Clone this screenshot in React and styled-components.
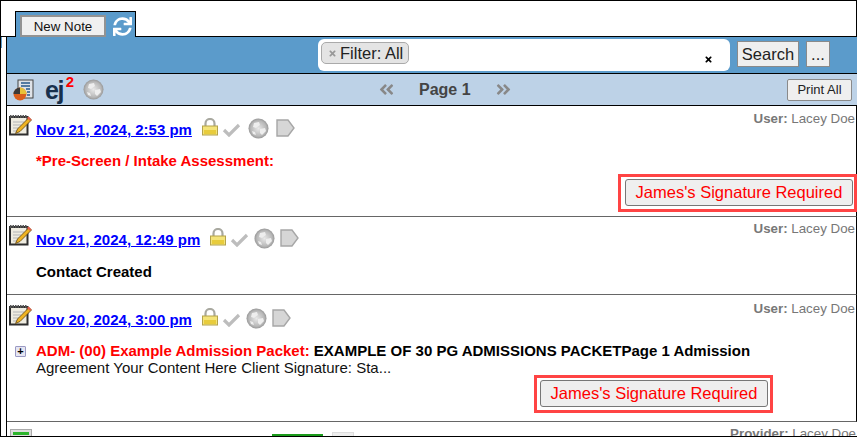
import React from "react";
import styled, { createGlobalStyle } from "styled-components";
import { FaSync, FaAngleDoubleLeft, FaAngleDoubleRight, FaTimes } from "react-icons/fa";

const Global = createGlobalStyle`
  html, body { margin: 0; background: #fff; }
  body { font-family: "Liberation Sans", Arial, sans-serif; }
`;

const Frame = styled.div`
  box-sizing: border-box;
  width: 857px;
  height: 437px;
  overflow: hidden;
  position: relative;
  border: 1px solid #000;
  border-right: none;
  background: #fff;
  &::before {
    content: "";
    position: absolute;
    left: 0;
    top: 36px;
    width: 1px;
    height: 11px;
    background: #5b9bcb;
  }
`;

const TabStrip = styled.div`
  box-sizing: border-box;
  height: 36px;
  padding-left: 14px;
  display: flex;
  align-items: flex-end;
  border-bottom: 1px solid #000;
  border-right: 1px solid #000;
`;

const Tab = styled.div`
  box-sizing: border-box;
  position: relative;
  width: 121px;
  height: 26px;
  margin-bottom: -1px;
  padding: 3px 0 0 4px;
  display: flex;
  align-items: flex-start;
  gap: 7px;
  background: #5b9bcb;
  border: 1px solid #000;
  border-bottom: none;
`;

const TabButton = styled.button`
  box-sizing: border-box;
  width: 86px;
  height: 22px;
  padding: 0;
  font: 13.33px "Liberation Sans", Arial, sans-serif;
  color: #111;
  background: #f0f0f0;
  border: 2px solid #939393;
`;

const RefreshIcon = styled(FaSync)`
  width: 19px;
  height: 19px;
  color: #fff;
  margin-top: 2px;
`;

const Workspace = styled.div`
  margin-left: 5px;
  border-left: 1px solid #000;
`;

const SearchBar = styled.div`
  box-sizing: border-box;
  height: 37px;
  padding: 2px 27px 0 0;
  display: flex;
  justify-content: flex-end;
  align-items: flex-start;
  gap: 7px;
  background: #5b9bcb;
  border-bottom: 1px solid #000;
`;

const FilterBox = styled.div`
  box-sizing: border-box;
  width: 412px;
  height: 32px;
  padding: 3px;
  display: flex;
  justify-content: space-between;
  background: #fff;
  border-radius: 6px;
`;

const Chip = styled.span`
  box-sizing: border-box;
  height: 22px;
  padding: 0 5px 0 6px;
  display: inline-flex;
  align-items: center;
  gap: 3px;
  font-size: 16.5px;
  color: #222;
  background: #e4e4e4;
  border: 1px solid #aaa;
  border-radius: 5px;
`;

const ChipClose = styled(FaTimes)`
  width: 9px;
  height: 9px;
  color: #999;
`;

const ClearIcon = styled(FaTimes)`
  width: 9px;
  height: 9px;
  color: #000;
  margin: 13px 14px 0 0;
`;

const BarButton = styled.button`
  box-sizing: border-box;
  height: 26px;
  margin-top: 2px;
  padding: 0;
  width: ${(p) => p.$width}px;
  font: 16.5px "Liberation Sans", Arial, sans-serif;
  color: #222;
  background: #efefef;
  border: 1px solid #8a8a8a;
`;

const PagerBar = styled.div`
  box-sizing: border-box;
  height: 32px;
  padding: 0 5px 0 6px;
  display: grid;
  grid-template-columns: 365px auto 1fr;
  align-items: center;
  background: #bdd2e7;
  border-bottom: 1px solid #000;
`;

const ToolIcons = styled.div`
  display: flex;
  align-items: center;
`;

const EjLogo = styled.span`
  margin-left: 11px;
  width: 38px;
  display: flex;
  align-items: flex-start;
  font-size: 25px;
  font-weight: 700;
  line-height: 26px;
  letter-spacing: -1.5px;
  color: #17304d;
`;

const EjCount = styled.span`
  margin: -3px 0 0 3px;
  font-size: 15px;
  line-height: 16px;
  letter-spacing: 0;
  color: #f00;
`;

const Pager = styled.div`
  display: flex;
  align-items: center;
  gap: 24px;
  color: #888;
  font-size: 16px;
  font-weight: 700;
`;

const PageLabel = styled.span`
  color: #444;
`;

const PagerArrow = styled.span`
  display: flex;
  font-size: 17px;
`;

const PrintButton = styled.button`
  justify-self: end;
  box-sizing: border-box;
  width: 65px;
  height: 22px;
  padding: 0;
  font: 13px "Liberation Sans", Arial, sans-serif;
  color: #222;
  background: #efefef;
  border: 1px solid #8a8a8a;
  border-radius: 2px;
`;

const Note = styled.section`
  box-sizing: border-box;
  height: ${(p) => p.$height}px;
  padding: ${(p) => p.$pad}px 1px 0 2px;
  border-bottom: 1px solid #666;
  border-right: 1px solid #000;
`;

const NoteHead = styled.div`
  display: flex;
  justify-content: space-between;
  align-items: flex-start;
`;

const NoteTitleRow = styled.div`
  display: flex;
  align-items: flex-start;
`;

const DateLink = styled.a`
  margin: 7px 10px 0 3px;
  font-size: 15px;
  font-weight: 700;
  color: #00f;
  text-decoration: underline;
`;

const StatusIcons = styled.div`
  display: flex;
  align-items: flex-start;
  gap: ${(p) => (p.$wide ? 7 : 5)}px;
  margin-top: 4px;
  svg:first-child {
    margin-right: ${(p) => (p.$wide ? -3 : -1)}px;
  }
`;

const Author = styled.div`
  margin-top: -3px;
  font-size: 13.33px;
  color: #777;
  white-space: nowrap;
  b { font-weight: 700; }
`;

const NoteBody = styled.div`
  padding-left: 27px;
  margin-top: ${(p) => p.$top}px;
  position: relative;
  font-size: 15px;
  line-height: 17px;
  color: #111;
`;

const RedTitle = styled.span`
  font-weight: 700;
  color: #f00;
`;

const BlackTitle = styled.span`
  font-weight: 700;
  color: #000;
`;

const ExpandBox = styled.span`
  position: absolute;
  left: 6px;
  top: 4px;
  box-sizing: border-box;
  width: 11px;
  height: 11px;
  border: 1px solid #9a9ac4;
  border-radius: 1px;
  background: #e6e6f2;
  color: #000;
  font-size: 11px;
  font-weight: 700;
  line-height: 9px;
  text-align: center;
`;

const ActionRow = styled.div`
  display: flex;
  justify-content: flex-end;
  margin: ${(p) => p.$top}px ${(p) => p.$right}px 0 0;
`;

const Highlight = styled.div`
  box-sizing: border-box;
  width: 239px;
  height: 38px;
  padding: 2px 0 0 ${(p) => p.$inset}px;
  border: 3px solid #f44;
`;

const SignButton = styled.button`
  display: block;
  box-sizing: border-box;
  width: 228px;
  height: 27px;
  padding: 0;
  font: 16.5px "Liberation Sans", Arial, sans-serif;
  color: #f00;
  background: #efefef;
  border: 1px solid #777;
  border-radius: 3px;
`;

const StubRow = styled.div`
  display: flex;
  justify-content: space-between;
  padding: 7px 1px 0 3px;
`;

const StubIcons = styled.div`
  display: flex;
  align-items: flex-start;
`;

const GreenBadge = styled.span`
  box-sizing: border-box;
  width: 22px;
  height: 10px;
  padding: 2px;
  background: #ddd;
  border: 1px solid #aaa;
  &::after {
    content: "";
    display: block;
    height: 3px;
    background: #2db52d;
  }
`;

const GreenBar = styled.span`
  width: 51px;
  height: 3px;
  margin: 5px 0 0 240px;
  background: #1c9c1c;
`;

const GrayBox = styled.span`
  width: 22px;
  height: 8px;
  margin: 3px 0 0 9px;
  background: #eee;
  border: 1px solid #ddd;
  box-sizing: border-box;
`;

const Gauge = () => (
  <svg width="21" height="22" viewBox="0 0 21 22">
    <rect x="5" y="1" width="15" height="18" fill="#dfe3e8" stroke="#444" />
    <path d="M8 4h9M8 7h9M13 10h4M14 13h3M14 16h3" stroke="#2a5a8a" strokeWidth="1.4" />
    <circle cx="7" cy="15" r="6.5" fill="#d95f1e" />
    <path d="M7 15V8.500a6.500 6.500 0 0 0-6.500 6.500z" fill="#3a3a3a" />
    <path d="M7 15h6.500a6.500 6.500 0 0 0-6.500-6.500z" fill="#e8c23a" />
  </svg>
);

const NotePad = () => (
  <svg width="23" height="22" viewBox="0 0 23 22" style={{ flexShrink: 0, marginRight: 1 }}>
    <rect x="1" y="3" width="17.500" height="17.500" fill="#efece0" stroke="#2e2e2e" strokeWidth="2" />
    <path d="M1 2.500h17" stroke="#555" strokeWidth="3" strokeDasharray="1.500 1" />
    <path d="M4 8h11M4 11h8M4 14h6M4 17h5" stroke="#b5b5b5" />
    <path d="M20 3.500l2.500 2.500-11.500 11.500-4.500 2 2-4.500z" fill="#efb321" stroke="#5e4212" strokeWidth=".8" />
    <path d="M19.500 2.500l3 3-1.500 1.500-3-3z" fill="#e4604e" />
  </svg>
);

const Lock = () => (
  <svg width="16" height="18" viewBox="0 0 16 18">
    <path d="M3.500 9V5.500a4.500 4.500 0 0 1 9 0V9" fill="none" stroke="#a9a9a0" strokeWidth="2.200" />
    <rect x=".5" y="8" width="15" height="9" fill="#f4e47a" stroke="#b3a24a" />
    <rect x="2" y="12" width="12" height="4" fill="#e8cc3c" />
  </svg>
);

const Check = () => (
  <svg width="19" height="14" viewBox="0 0 19 14" style={{ marginTop: 5 }}>
    <path d="M2 7l5 5L17 2" fill="none" stroke="#bdbdbd" strokeWidth="3.200" />
  </svg>
);

const Globe = ({ id, size = 21 }) => (
  <svg width={size} height={size} viewBox="0 0 21 21">
    <defs>
      <radialGradient id={id} cx="50%" cy="50%" r="55%">
        <stop offset="0" stopColor="#e8e8e8" />
        <stop offset=".7" stopColor="#b8b8b8" />
        <stop offset="1" stopColor="#8a8a8a" />
      </radialGradient>
    </defs>
    <circle cx="10.500" cy="10.500" r="10" fill={`url(#${id})`} />
    <path d="M6 5l5-1 1 3-4 3-3-1zM12 11l5-1 1 3-4 4-2-2zM4 13l3 1 1 3-3-1z" fill="#eee" />
  </svg>
);

const Tag = () => (
  <svg width="19" height="18" viewBox="0 0 19 18" style={{ marginTop: 1 }}>
    <path d="M1 1h11l6 8-6 8H1z" fill="#d6d6d6" stroke="#a6a6a6" strokeWidth="1.400" />
  </svg>
);

const NoteHeader = ({ date, id, wide, author = "Lacey Doe" }) => (
  <NoteHead>
    <NoteTitleRow>
      <NotePad />
      <DateLink href="#">{date}</DateLink>
      <StatusIcons $wide={wide}>
        <Lock />
        <Check />
        <Globe id={id} />
        <Tag />
      </StatusIcons>
    </NoteTitleRow>
    <Author>
      <b>User:</b> {author}
    </Author>
  </NoteHead>
);

const SignatureAction = ({ top, right, inset }) => (
  <ActionRow $top={top} $right={right}>
    <Highlight $inset={inset}>
      <SignButton>James's Signature Required</SignButton>
    </Highlight>
  </ActionRow>
);

export default function App() {
  return (
    <>
      <Global />
      <Frame>
        <TabStrip>
          <Tab>
            <TabButton>New Note</TabButton>
            <RefreshIcon />
          </Tab>
        </TabStrip>
        <Workspace>
          <SearchBar>
            <FilterBox>
              <Chip>
                <ChipClose />
                Filter: All
              </Chip>
              <ClearIcon />
            </FilterBox>
            <BarButton $width={62}>Search</BarButton>
            <BarButton $width={24}>...</BarButton>
          </SearchBar>
          <PagerBar>
            <ToolIcons>
              <Gauge />
              <EjLogo>
                ej<EjCount>2</EjCount>
              </EjLogo>
              <Globe id="toolGlobe" />
            </ToolIcons>
            <Pager>
              <PagerArrow>
                <FaAngleDoubleLeft />
              </PagerArrow>
              <PageLabel>Page 1</PageLabel>
              <PagerArrow>
                <FaAngleDoubleRight />
              </PagerArrow>
            </Pager>
            <PrintButton>Print All</PrintButton>
          </PagerBar>

          <Note $height={111} $pad={8}>
            <NoteHeader date="Nov 21, 2024, 2:53 pm" id="g1" wide />
            <NoteBody $top={13}>
              <RedTitle>*Pre-Screen / Intake Assessment:</RedTitle>
            </NoteBody>
            <SignatureAction top={5} right={-2} inset={4} />
          </Note>

          <Note $height={78} $pad={7}>
            <NoteHeader date="Nov 21, 2024, 12:49 pm" id="g2" />
            <NoteBody $top={14}>
              <BlackTitle>Contact Created</BlackTitle>
            </NoteBody>
          </Note>

          <Note $height={127} $pad={9}>
            <NoteHeader date="Nov 20, 2024, 3:00 pm" id="g3" />
            <NoteBody $top={13}>
              <ExpandBox>+</ExpandBox>
              <RedTitle>ADM- (00) Example Admission Packet:</RedTitle>{" "}
              <BlackTitle>EXAMPLE OF 30 PG ADMISSIONS PACKETPage 1 Admission</BlackTitle>
              <br />
              Agreement Your Content Here Client Signature: Sta...
            </NoteBody>
            <SignatureAction top={-1} right={82} inset={3} />
          </Note>

          <StubRow>
            <StubIcons>
              <GreenBadge />
              <GreenBar />
              <GrayBox />
            </StubIcons>
            <Author>
              <b>Provider:</b> Lacey Doe
            </Author>
          </StubRow>
        </Workspace>
      </Frame>
    </>
  );
}
